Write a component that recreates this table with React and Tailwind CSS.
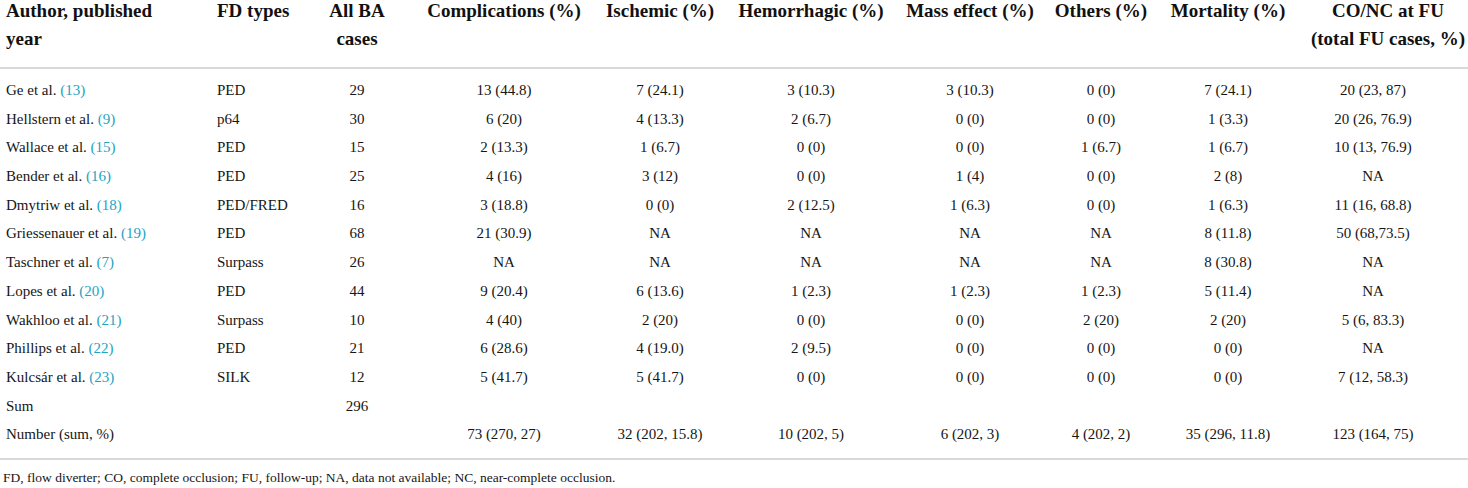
import React from "react";

const rows = [
  ["Ge et al.", "13", "PED", "29", "13 (44.8)", "7 (24.1)", "3 (10.3)", "3 (10.3)", "0 (0)", "7 (24.1)", "20 (23, 87)"],
  ["Hellstern et al.", "9", "p64", "30", "6 (20)", "4 (13.3)", "2 (6.7)", "0 (0)", "0 (0)", "1 (3.3)", "20 (26, 76.9)"],
  ["Wallace et al.", "15", "PED", "15", "2 (13.3)", "1 (6.7)", "0 (0)", "0 (0)", "1 (6.7)", "1 (6.7)", "10 (13, 76.9)"],
  ["Bender et al.", "16", "PED", "25", "4 (16)", "3 (12)", "0 (0)", "1 (4)", "0 (0)", "2 (8)", "NA"],
  ["Dmytriw et al.", "18", "PED/FRED", "16", "3 (18.8)", "0 (0)", "2 (12.5)", "1 (6.3)", "0 (0)", "1 (6.3)", "11 (16, 68.8)"],
  ["Griessenauer et al.", "19", "PED", "68", "21 (30.9)", "NA", "NA", "NA", "NA", "8 (11.8)", "50 (68,73.5)"],
  ["Taschner et al.", "7", "Surpass", "26", "NA", "NA", "NA", "NA", "NA", "8 (30.8)", "NA"],
  ["Lopes et al.", "20", "PED", "44", "9 (20.4)", "6 (13.6)", "1 (2.3)", "1 (2.3)", "1 (2.3)", "5 (11.4)", "NA"],
  ["Wakhloo et al.", "21", "Surpass", "10", "4 (40)", "2 (20)", "0 (0)", "0 (0)", "2 (20)", "2 (20)", "5 (6, 83.3)"],
  ["Phillips et al.", "22", "PED", "21", "6 (28.6)", "4 (19.0)", "2 (9.5)", "0 (0)", "0 (0)", "0 (0)", "NA"],
  ["Kulcsár et al.", "23", "SILK", "12", "5 (41.7)", "5 (41.7)", "0 (0)", "0 (0)", "0 (0)", "0 (0)", "7 (12, 58.3)"],
];

const grid =
  "grid grid-cols-[205px_101px_102px_192px_120px_182px_136px_126px_128px_176px]";

const Cell = ({ children, last }) => (
  <div className={`flex justify-center whitespace-nowrap ${last ? "pr-[14px]" : ""}`}>
    {children}
  </div>
);

const Row = ({ author, ref_, fd, cases, values }) => (
  <div className={`${grid} h-[28.7px] leading-[28.7px]`}>
    <div className="pl-[6px] whitespace-nowrap">
      {author}
      {ref_ && <span className="text-[#1fa3c1]"> ({ref_})</span>}
    </div>
    <div className="pl-[12px] whitespace-nowrap">{fd}</div>
    <Cell>{cases}</Cell>
    {values.map((v, i) => (
      <Cell key={i} last={i === values.length - 1}>
        {v}
      </Cell>
    ))}
  </div>
);

export default function App() {
  const empty = ["", "", "", "", "", "", ""];

  return (
    <div className="w-[1468px] h-[488px] overflow-hidden bg-white text-[#161616] font-['Liberation_Serif',serif]">
      {/* Cabecera */}
      <div
        className={`${grid} -mt-[3px] pb-[14px] border-b-2 border-[#d9d9d9] items-start text-[19px] leading-[28px] font-bold text-[#111]`}
      >
        <div className="pl-[6px]">
          Author, published
          <br />
          year
        </div>
        <div className="pl-[12px] whitespace-nowrap">FD types</div>
        <div className="text-center">
          All BA
          <br />
          cases
        </div>
        <Cell>Complications (%)</Cell>
        <Cell>Ischemic (%)</Cell>
        <Cell>Hemorrhagic (%)</Cell>
        <Cell>Mass effect (%)</Cell>
        <Cell>Others (%)</Cell>
        <Cell>Mortality (%)</Cell>
        <div className="pl-[16px] flex justify-center">
          <div className="text-center whitespace-nowrap">
            CO/NC at FU
            <br />
            (total FU cases, %)
          </div>
        </div>
      </div>

      {/* Filas */}
      <div className="pt-[7px] pb-[9px] border-b-2 border-[#d9d9d9] text-[15px]">
        {rows.map((r) => (
          <Row
            key={r[0]}
            author={r[0]}
            ref_={r[1]}
            fd={r[2]}
            cases={r[3]}
            values={r.slice(4)}
          />
        ))}
        <Row author="Sum" fd="" cases="296" values={empty} />
        <Row
          author="Number (sum, %)"
          fd=""
          cases=""
          values={[
            "73 (270, 27)",
            "32 (202, 15.8)",
            "10 (202, 5)",
            "6 (202, 3)",
            "4 (202, 2)",
            "35 (296, 11.8)",
            "123 (164, 75)",
          ]}
        />
      </div>

      <p className="pl-[3px] pt-[8px] text-[13.5px] leading-[20px] text-[#161616]">
        FD, flow diverter; CO, complete occlusion; FU, follow-up; NA, data not available; NC, near-complete occlusion.
      </p>
    </div>
  );
}
